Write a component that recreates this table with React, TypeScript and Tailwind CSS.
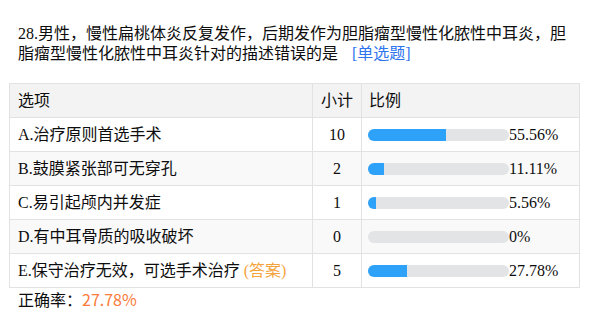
const rows = [
  { label: "A.治疗原则首选手术", count: 10, pct: 55.56 },
  { label: "B.鼓膜紧张部可无穿孔", count: 2, pct: 11.11 },
  { label: "C.易引起颅内并发症", count: 1, pct: 5.56 },
  { label: "D.有中耳骨质的吸收破坏", count: 0, pct: 0 },
  { label: "E.保守治疗无效，可选手术治疗", count: 5, pct: 27.78, answer: true },
];

const font = { fontFamily: '"Liberation Serif", "Noto Sans CJK SC", serif' };

function fmt(p: number) {
  return p === 0 ? "0%" : `${p.toFixed(2)}%`;
}

export default function App() {
  return (
    <div className="h-[313px] w-[595px] bg-white text-[16px] text-[#0d0d0d]" style={font}>
      <div className="px-[18px] pt-[24px] leading-[20px]">
        <div>28.男性，慢性扁桃体炎反复发作，后期发作为胆脂瘤型慢性化脓性中耳炎，胆</div>
        <div className="flex">
          <span>脂瘤型慢性化脓性中耳炎针对的描述错误的是</span>
          <span className="ml-[14px] text-[#2e74ee]">[单选题]</span>
        </div>
      </div>

      <div className="ml-[9px] mt-[19px] w-[571px] border-x border-t border-[#e2e2e2]">
        <div className="flex h-[34px] border-b border-[#e2e2e2] bg-[#f3f3f3]">
          <div className="flex w-[302px] items-center pl-[8px]">选项</div>
          <div className="flex w-[49px] items-center justify-center border-l border-[#e2e2e2]">小计</div>
          <div className="flex flex-1 items-center border-l border-[#e2e2e2] pl-[7px]">比例</div>
        </div>
        {rows.map((r, i) => (
          <div
            key={r.label}
            className={`flex h-[34px] border-b border-[#e2e2e2] ${i % 2 === 1 ? "bg-[#f9f9f9]" : "bg-white"}`}
          >
            <div className="flex w-[302px] items-center pl-[8px]">
              {r.label}
              {r.answer && <span className="ml-[4px] text-[#f4a43c]">(答案)</span>}
            </div>
            <div className="flex w-[49px] items-center justify-center border-l border-[#e2e2e2]">{r.count}</div>
            <div className="flex flex-1 items-center border-l border-[#e2e2e2] pl-[6px]">
              <div className="h-[12px] w-[141px] overflow-hidden rounded-full bg-[#e3e4e6]">
                <div className="h-full bg-[#2ea2f8]" style={{ width: `${r.pct}%` }} />
              </div>
              <span>{fmt(r.pct)}</span>
            </div>
          </div>
        ))}
      </div>

      <p className="pl-[18px] leading-[22px]">
        正确率：
        <span className="text-[#fb7b3a]" style={{ fontFamily: '"Noto Sans CJK SC", sans-serif' }}>
          27.78%
        </span>
      </p>
    </div>
  );
}
